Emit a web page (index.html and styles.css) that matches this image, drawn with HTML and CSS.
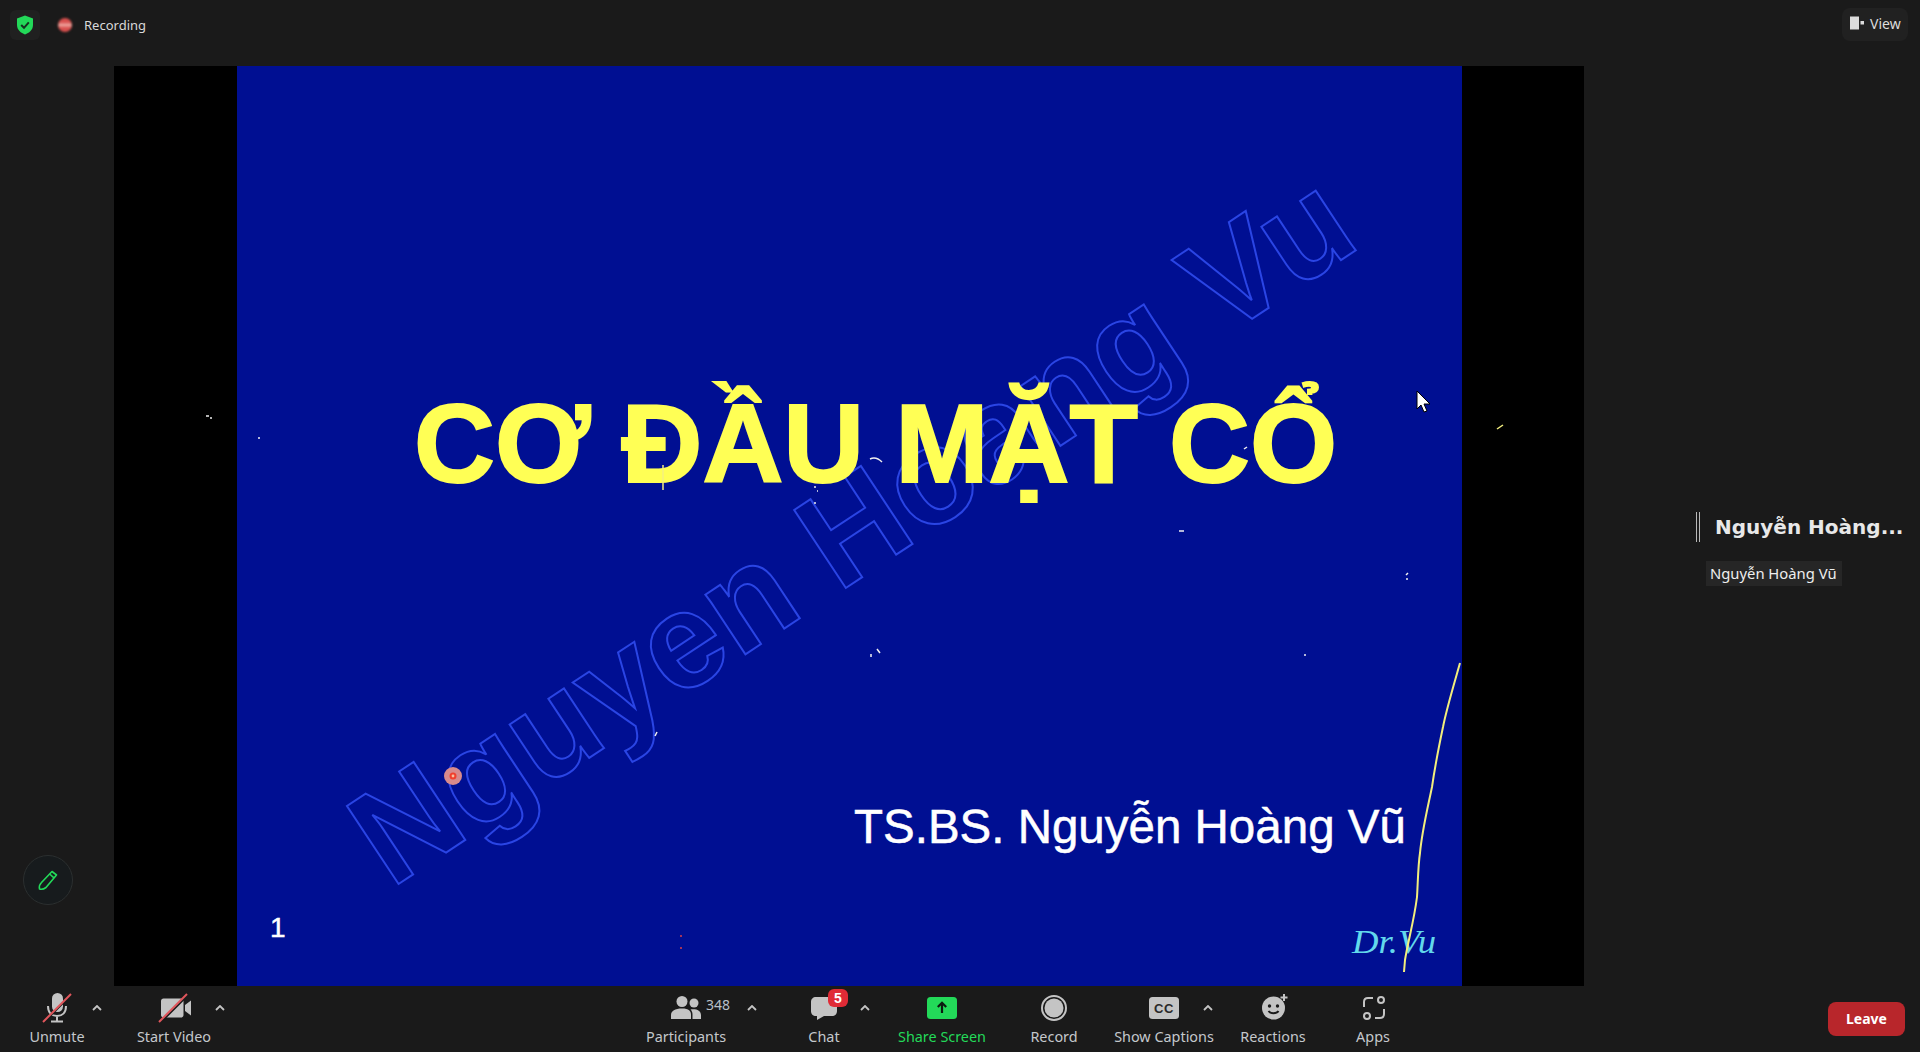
FILE: index.html
```html
<!DOCTYPE html>
<html lang="vi">
<head>
    <meta charset="UTF-8">
    <meta name="viewport" content="width=device-width, initial-scale=1.0">
    <title>Zoom Meeting</title>
    <link rel="stylesheet" href="styles.css">
</head>
<body>
    <header class="topbar">
        <div class="shield-box">
            <svg width="18" height="20" viewBox="0 0 18 20">
                <path class="green-fill" d="M9 0.5 L17 3.5 V10 C17 15 13 18 9 19.5 C5 18 1 15 1 10 V3.5 Z"/>
                <path class="tick" d="M5.2 10 L8 12.8 L12.8 7.4"/>
            </svg>
        </div>
        <div class="rec-dot"></div>
        <span class="rec-text">Recording</span>
        <div class="view-btn">
            <svg width="14" height="14" viewBox="0 0 14 14">
                <rect class="view-icon" x="0" y="0.5" width="9" height="13"/>
                <rect class="view-icon" x="10.5" y="5" width="3.5" height="3.5"/>
            </svg>
            <span>View</span>
        </div>
    </header>

    <main class="middle">
        <aside class="gutter">
            <div class="pencil-btn">
                <svg width="22" height="22" viewBox="0 0 22 22">
                    <path class="pencil" d="M15 2.5 L19.5 6 L9 18.5 C7 20 4 20.5 2.5 20 C2 18 3 15 4.5 13.5 Z"/>
                    <path class="pencil" d="M12.6 5 L17 8.8"/>
                </svg>
            </div>
        </aside>

        <section class="stage">
            <div class="slide"></div>
            <svg class="slide-art" viewBox="0 0 1470 920">
                <text class="watermark" x="277" y="823" textLength="1166" transform="rotate(-33.5 277 823)">Nguyen Hoang Vu</text>
                <text class="slide-title" x="300" y="416">CƠ ĐẦU MẶT CỔ</text>
                <text class="slide-author" x="740" y="777">TS.BS. Nguyễn Hoàng Vũ</text>
                <text class="slide-num" x="156" y="871">1</text>
                <text class="slide-sign" x="1238" y="887" textLength="84" lengthAdjust="spacingAndGlyphs">Dr.Vu</text>

                <path class="ink" d="M1346 597 C1338 625 1332 645 1329 661 C1325 680 1321 700 1318 721 C1313 745 1308 765 1306 787 C1304 800 1304 815 1303 831 C1300 855 1294 875 1291 894 L1290 906"/>

                <circle class="laser-glow" cx="339" cy="710" r="9"/>
                <circle class="laser-ring" cx="339" cy="710" r="3.5"/>
                <circle class="laser-core" cx="339" cy="710" r="1.4"/>

                <!-- stray marks left on the slide -->
                <path class="speck" d="M549 399 V424"/>
                <path class="speck-white" d="M756 393 C760 391 764 392 768 396"/>
                <path class="speck-white" d="M92 350 h3 M96 352 h2"/>
                <path class="speck-white" d="M144 372 h2"/>
                <path class="speck-white" d="M700 421 h2 M703 425 h1 M700 437 h2"/>
                <path class="speck-white" d="M1065 465 h5"/>
                <path class="speck-white" d="M1292 509 l2 -2 M1292 513 h2"/>
                <path class="speck-white" d="M1190 589 h2"/>
                <path class="speck-white" d="M757 588 v3 M763 583 l3 4"/>
                <path class="speck-white" d="M541 670 l2 -4"/>
                <path class="speck-white" d="M1130 383 l3 -2"/>
                <path class="speck-red" d="M566 870 h2 M566 882 h2"/>
                <path class="speck" d="M1383 363 l6 -4"/>

                <path class="cursor" d="M1303 325 V343 L1307 339 L1310 346 L1313 345 L1310 338 L1316 338 Z"/>
            </svg>
        </section>

        <aside class="speaker-panel">
            <div class="speaker-head">
                <div class="speaker-bar"></div>
                <span class="speaker-name">Nguyễn Hoàng...</span>
            </div>
            <div class="name-tag">Nguyễn Hoàng Vũ</div>
        </aside>
    </main>

    <footer class="toolbar">
        <div class="tool tool-unmute">
            <svg class="tool-icon" width="32" height="32" viewBox="0 0 32 32">
                <rect class="grey-fill" x="11" y="1" width="11" height="19" rx="5.5"/>
                <path class="grey-line" d="M7 14 C7 21 11 24 16 24 C21 24 25 21 25 14 M16 24 V29 M10 29.5 H22"/>
                <path class="slash-gap" d="M3 30 L31 2"/>
                <path class="slash" d="M2 30 L30 2"/>
            </svg>
            <span class="tool-label">Unmute</span>
            <svg class="caret caret-unmute" width="10" height="6" viewBox="0 0 10 6"><path d="M1 5 L5 1 L9 5"/></svg>
        </div>
        <div class="tool tool-video">
            <svg class="tool-icon" width="36" height="32" viewBox="0 0 36 32">
                <path class="grey-fill" d="M5 9 C5 7.5 6 6.500 7.500 6.500 H25 C26.500 6.500 27.500 7.500 27.500 9 V23 C27.500 24.500 26.500 25.500 25 25.500 H7.500 C6 25.500 5 24.500 5 23 Z"/>
                <path class="grey-fill" d="M29 13 L35 8.500 V23.500 L29 19 Z"/>
                <path class="slash-gap" d="M5 30 L33 2"/>
                <path class="slash" d="M3 30 L31 2"/>
            </svg>
            <span class="tool-label">Start Video</span>
            <svg class="caret caret-video" width="10" height="6" viewBox="0 0 10 6"><path d="M1 5 L5 1 L9 5"/></svg>
        </div>
        <div class="tool tool-participants">
            <svg class="tool-icon" width="32" height="32" viewBox="0 0 32 32">
                <circle class="grey-fill" cx="12" cy="9.500" r="5.500"/>
                <circle class="grey-fill" cx="24" cy="11" r="4.500"/>
                <path class="grey-fill" d="M1 27 V23 C1 19 5 16.500 12 16.500 C19 16.500 21 19 21 23 V27 Z"/>
                <path class="grey-fill" d="M22.500 27 V22.500 C22.500 20 21.500 18.500 20.500 17.500 C26 16.500 31 18.500 31 23 V27 Z"/>
            </svg>
            <span class="count">348</span>
            <span class="tool-label">Participants</span>
            <svg class="caret caret-participants" width="10" height="6" viewBox="0 0 10 6"><path d="M1 5 L5 1 L9 5"/></svg>
        </div>
        <div class="tool tool-chat">
            <svg class="tool-icon" width="32" height="32" viewBox="0 0 32 32">
                <path class="grey-fill" d="M8 5 H24 C27 5 29 7 29 10 V19 C29 22 27 24 24 24 H16 L9 28 V24 H8 C5 24 3 22 3 19 V10 C3 7 5 5 8 5 Z"/>
            </svg>
            <span class="badge">5</span>
            <span class="tool-label">Chat</span>
            <svg class="caret caret-chat" width="10" height="6" viewBox="0 0 10 6"><path d="M1 5 L5 1 L9 5"/></svg>
        </div>
        <div class="tool tool-share">
            <svg class="tool-icon" width="32" height="32" viewBox="0 0 32 32">
                <rect class="green-fill" x="1" y="5" width="30" height="22" rx="3.500"/>
                <path class="share-arrow" d="M16 21 V11 M11.800 15 L16 10.800 L20.200 15"/>
            </svg>
            <span class="tool-label tool-label-green">Share Screen</span>
        </div>
        <div class="tool tool-record">
            <svg class="tool-icon" width="32" height="32" viewBox="0 0 32 32">
                <circle class="grey-line" cx="16" cy="16" r="12"/>
                <circle class="grey-fill" cx="16" cy="16" r="9.500"/>
            </svg>
            <span class="tool-label">Record</span>
        </div>
        <div class="tool tool-captions">
            <svg class="tool-icon" width="32" height="32" viewBox="0 0 32 32">
                <rect class="grey-fill" x="1" y="5" width="30" height="22" rx="3.500"/>
                <text class="cc-text" x="16" y="21">CC</text>
            </svg>
            <span class="tool-label">Show Captions</span>
            <svg class="caret caret-captions" width="10" height="6" viewBox="0 0 10 6"><path d="M1 5 L5 1 L9 5"/></svg>
        </div>
        <div class="tool tool-reactions">
            <svg class="tool-icon" width="32" height="32" viewBox="0 0 32 32">
                <circle class="grey-fill" cx="16.500" cy="16" r="11.500"/>
                <circle class="dark-fill" cx="12.500" cy="14" r="1.700"/>
                <circle class="dark-fill" cx="20.500" cy="14" r="1.700"/>
                <path class="smile" d="M11.500 19 C13.500 22 19.500 22 21.500 19"/>
                <path class="grey-thin" d="M27 2 V9 M23.500 5.500 H30.500"/>
            </svg>
            <span class="tool-label">Reactions</span>
        </div>
        <div class="tool tool-apps">
            <svg class="tool-icon" width="32" height="32" viewBox="0 0 32 32">
                <path class="grey-thin" d="M7 15 V10 C7 7.500 8.500 6 11 6 H16 M27 17 V22 C27 24.500 25.500 26 23 26 H18"/>
                <circle class="grey-thin" cx="24" cy="8" r="3"/>
                <circle class="grey-thin" cx="10" cy="24" r="3"/>
            </svg>
            <span class="tool-label">Apps</span>
        </div>
        <div class="leave-btn">Leave</div>
    </footer>
</body>
</html>
```

FILE: styles.css
```css
html, body {
    margin: 0;
    padding: 0;
    height: 100%;
}
body {
    display: flex;
    flex-direction: column;
    height: 1052px;
    overflow: hidden;
    background-color: #1a1a1a;
    font-family: "Noto Sans", "Open Sans", Arial, sans-serif;
    color: #d4d4d4;
}

/* top bar */
.topbar {
    flex: 0 0 66px;
    display: flex;
    align-items: flex-start;
    box-sizing: border-box;
    padding: 10px 12px 0 10px;
}
.shield-box {
    width: 30px;
    height: 30px;
    border-radius: 6px;
    background-color: #202020;
    display: flex;
    align-items: center;
    justify-content: center;
}
.tick {
    fill: none;
    stroke: #16301f;
    stroke-width: 2;
}
.rec-dot {
    width: 14px;
    height: 14px;
    margin: 8px 0 0 18px;
    border-radius: 50%;
    background: linear-gradient(#d9504e 30%, #f0b0a8 50%, #d9504e 70%);
    filter: blur(1px);
}
.rec-text {
    margin: 4px 0 0 12px;
    font-size: 13px;
    line-height: 22px;
    color: #d8d8d8;
}
.view-btn {
    margin: -2px 0 0 auto;
    width: 66px;
    height: 33px;
    box-sizing: border-box;
    padding: 0 0 3px 8px;
    border-radius: 8px;
    background-color: #212121;
    display: flex;
    align-items: center;
    gap: 6px;
    font-size: 14px;
    color: #dcdcdc;
}
.view-icon {
    fill: #dcdcdc;
}

/* middle */
.middle {
    flex: 0 0 920px;
    display: flex;
}
.gutter {
    flex: 0 0 114px;
    display: flex;
    flex-direction: column;
    justify-content: flex-end;
    box-sizing: border-box;
    padding: 0 0 81px 23px;
}
.pencil-btn {
    width: 50px;
    height: 50px;
    box-sizing: border-box;
    border: 1px solid #2b2f2f;
    border-radius: 50%;
    background-color: #171b1d;
    display: flex;
    align-items: center;
    justify-content: center;
}
.pencil {
    fill: none;
    stroke: #23d959;
    stroke-width: 1.6;
    stroke-linejoin: round;
}
.stage {
    flex: 0 0 1470px;
    position: relative;
    background-color: #000;
    display: flex;
    justify-content: center;
}
.slide {
    width: 1225px;
    background-color: #000f92;
}
.slide-art {
    position: absolute;
    left: 0;
    top: 0;
    width: 1470px;
    height: 920px;
}
.watermark {
    font-family: "Liberation Sans", Arial, sans-serif;
    font-weight: bold;
    font-size: 136px;
    fill: none;
    stroke: #2a45e4;
    stroke-width: 2;
}
.slide-title {
    font-family: "Liberation Sans", Arial, sans-serif;
    font-weight: bold;
    font-size: 112px;
    fill: #ffff55;
    stroke: #ffff55;
    stroke-width: 2;
}
.slide-author {
    font-family: "Liberation Sans", Arial, sans-serif;
    font-size: 47.5px;
    fill: #fff;
    stroke: #fff;
    stroke-width: 0.5;
}
.slide-num {
    font-family: "Liberation Sans", Arial, sans-serif;
    font-size: 28px;
    fill: #fff;
    stroke: #fff;
    stroke-width: 0.5;
}
.slide-sign {
    font-family: "Liberation Serif", "Times New Roman", serif;
    font-style: italic;
    font-size: 33px;
    fill: #62d8ec;
}
.ink {
    fill: none;
    stroke: #f2ee7c;
    stroke-width: 2;
}
.laser-glow {
    fill: #d88a8c;
}
.laser-ring {
    fill: #f0402e;
}
.laser-core {
    fill: #f6c0a0;
}
.speck, .speck-white, .speck-red {
    fill: none;
    stroke-width: 1.5;
}
.speck {
    stroke: #f4f080;
}
.speck-white {
    stroke: #f0f0f0;
}
.speck-red {
    stroke: #d8404a;
}
.cursor {
    fill: #fff;
    stroke: #000;
    stroke-width: 1;
}

/* active speaker */
.speaker-panel {
    flex: 1;
    box-sizing: border-box;
    padding: 446px 0 0 112px;
}
.speaker-head {
    display: flex;
    align-items: center;
    height: 30px;
}
.speaker-bar {
    width: 2px;
    height: 30px;
    border-left: 1px solid #b8b8b8;
    border-right: 1px solid #b8b8b8;
    margin-right: 15px;
}
.speaker-name {
    font-family: "DejaVu Sans", Verdana, sans-serif;
    font-weight: bold;
    font-size: 20px;
    white-space: nowrap;
    color: #e8e8e8;
}
.name-tag {
    display: inline-block;
    margin: 19px 0 0 10px;
    padding: 0 5px 0 4px;
    height: 25px;
    line-height: 25px;
    background-color: #262626;
    font-size: 14.8px;
    color: #eeeeee;
}

/* bottom toolbar */
.toolbar {
    flex: 0 0 66px;
    display: flex;
    align-items: flex-start;
}
.tool {
    position: relative;
    box-sizing: border-box;
    padding-top: 6px;
    display: flex;
    flex-direction: column;
    align-items: center;
}
.tool-icon {
    display: block;
}
.tool-label {
    margin-top: 4px;
    font-size: 14.4px;
    line-height: 18px;
    white-space: nowrap;
    color: #c4c8cc;
}
.tool-label-green {
    color: #23d959;
}
.tool-unmute { width: 80px; margin-left: 17px; }
.tool-video { width: 90px; margin-left: 32px; }
.tool-participants { width: 92px; margin-left: 421px; }
.tool-chat { width: 88px; margin-left: 48px; }
.tool-share { width: 100px; margin-left: 24px; }
.tool-record { width: 80px; margin-left: 22px; }
.tool-captions { width: 120px; margin-left: 10px; }
.tool-reactions { width: 80px; margin-left: 9px; }
.tool-apps { width: 80px; margin-left: 20px; }

.grey-fill { fill: #c4c4c4; }
.dark-fill { fill: #1a1a1a; }
.grey-line {
    fill: none;
    stroke: #c4c4c4;
    stroke-width: 2;
}
.grey-thin {
    fill: none;
    stroke: #c4c4c4;
    stroke-width: 2;
}
.green-fill { fill: #23d959; }
.slash {
    stroke: #e0565c;
    stroke-width: 2;
}
.slash-gap {
    stroke: #1a1a1a;
    stroke-width: 2;
}
.smile {
    fill: none;
    stroke: #1a1a1a;
    stroke-width: 2;
}
.share-arrow {
    fill: none;
    stroke: #0c1a10;
    stroke-width: 2.2;
}
.cc-text {
    font-family: "Liberation Sans", Arial, sans-serif;
    font-weight: bold;
    font-size: 13px;
    letter-spacing: 0.5px;
    text-anchor: middle;
    fill: #2a2a2a;
}
.caret {
    position: absolute;
    top: 19px;
}
.caret path {
    fill: none;
    stroke: #c4c4c4;
    stroke-width: 1.8;
}
.caret-unmute { left: 75px; }
.caret-video { left: 86px; }
.caret-participants { left: 107px; }
.caret-chat { left: 80px; }
.caret-captions { left: 99px; }
.count {
    position: absolute;
    left: 66px;
    top: 10px;
    font-size: 14px;
    line-height: 18px;
    color: #b8c0c8;
}
.badge {
    position: absolute;
    left: 48px;
    top: 3px;
    width: 20px;
    height: 18px;
    border-radius: 6px;
    background-color: #e02b36;
    color: #fff;
    font-family: "Liberation Sans", Arial, sans-serif;
    font-weight: bold;
    font-size: 14px;
    line-height: 18px;
    text-align: center;
}
.leave-btn {
    margin: 16px 15px 0 auto;
    width: 77px;
    height: 34px;
    border-radius: 8px;
    background-color: #b8262b;
    color: #fff;
    font-weight: bold;
    font-size: 14px;
    line-height: 33px;
    text-align: center;
}
```
